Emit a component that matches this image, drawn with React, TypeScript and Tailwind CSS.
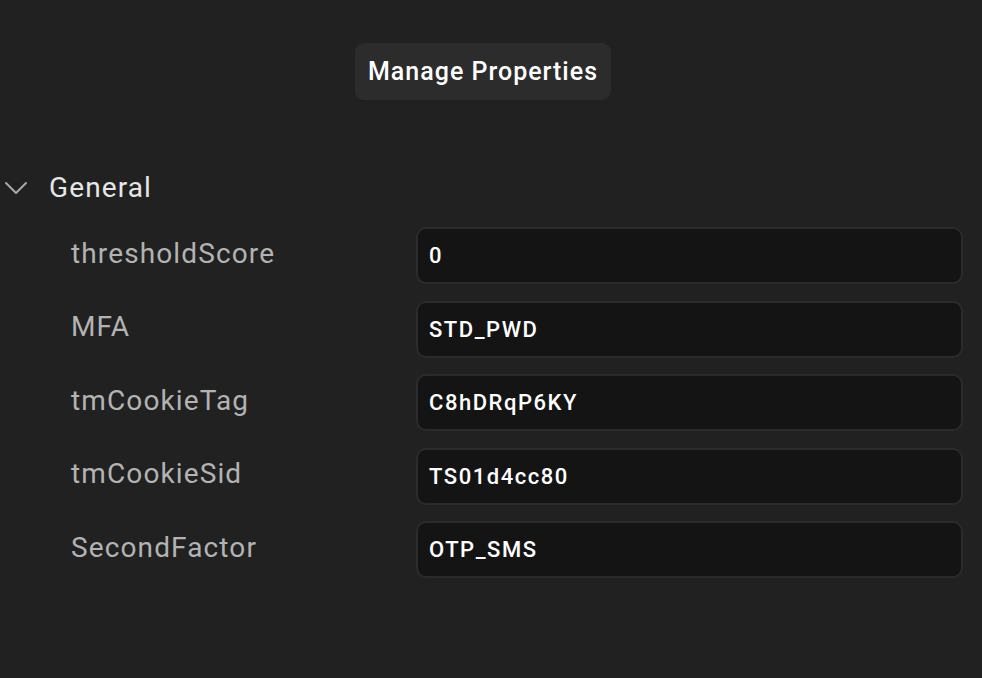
const rows = [
  { label: 'thresholdScore', value: '0' },
  { label: 'MFA', value: 'STD_PWD' },
  { label: 'tmCookieTag', value: 'C8hDRqP6KY' },
  { label: 'tmCookieSid', value: 'TS01d4cc80' },
  { label: 'SecondFactor', value: 'OTP_SMS' },
];

export default function App() {
  return (
    <div className="w-[982px] h-[678px] bg-[#212121] overflow-hidden" style={{ fontFamily: 'Roboto, "Noto Sans", sans-serif' }}>
      <div className="pt-[43px] pl-[355px]">
        <button className="h-[57px] w-[256px] rounded-[9px] bg-[#2c2c2c] text-white text-[25px] font-medium tracking-[0.04em]">
          Manage Properties
        </button>
      </div>

      <div className="mt-[72px] flex items-center h-[32px]">
        <svg className="ml-[4px] w-[24px] h-[14px]" viewBox="0 0 24 14" fill="none">
          <path d="M2 2 L12 12 L22 2" stroke="#a8a8a8" strokeWidth="2" strokeLinecap="round" strokeLinejoin="round" />
        </svg>
        <span className="ml-[21px] text-[28px] text-[#e6e6e6] tracking-[0.04em]">General</span>
      </div>

      <div className="mt-[23px] flex flex-col gap-[16.5px] pr-[19px]">
        {rows.map((r) => (
          <div key={r.label} className="flex items-center">
            <div className="w-[416px] pl-[71px] pb-[4px] text-[28px] text-[#b3b3b3] tracking-[0.04em]">{r.label}</div>
            <div className="flex-1 h-[57px] flex items-center rounded-[10px] border-2 border-[#2b2b2b] bg-[#141414] pl-[11px] text-[22px] font-medium text-white tracking-[0.07em]">
              {r.value}
            </div>
          </div>
        ))}
      </div>
    </div>
  );
}
